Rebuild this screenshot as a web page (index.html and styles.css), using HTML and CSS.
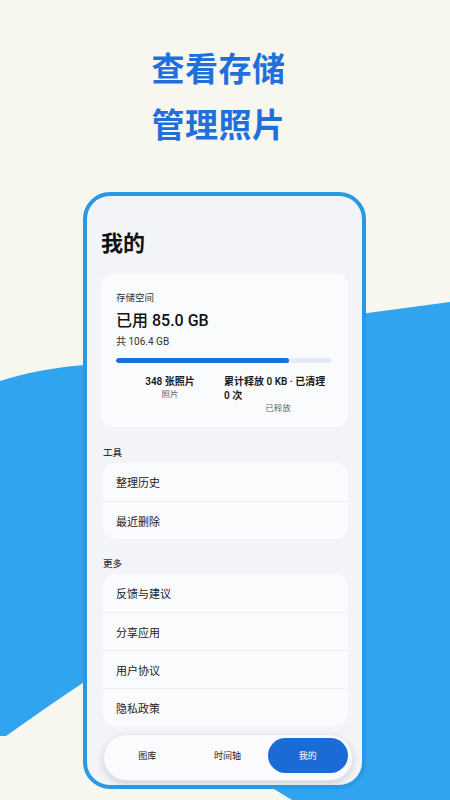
FILE: index.html
```html
<!DOCTYPE html>
<html lang="zh-CN">
<head>
<meta charset="utf-8">
<title>查看存储 管理照片</title>
<link rel="stylesheet" href="styles.css">
</head>
<body>
<svg class="blob" width="450" height="800" viewBox="0 0 450 800" aria-hidden="true">
  <path d="M0 381 Q40 368 95 364 L360 314 L450 302 L450 800 L292 800 L90 678 Q48 706 6 736 L0 736 Z" fill="#30a4ef"/>
</svg>
<main class="page">
  <h1 class="headline">查看存储<br>管理照片</h1>
  <section class="phone">
    <div class="screen">
      <h2 class="title">我的</h2>
      <div class="card storage">
        <div class="storage-label">存储空间</div>
        <div class="storage-used">已用 85.0 GB</div>
        <div class="storage-total">共 106.4 GB</div>
        <div class="bar"><div class="bar-fill" style="width: 79.9%"></div></div>
        <div class="stats">
          <div class="stat">
            <div class="stat-value">348 张照片</div>
            <div class="stat-label">照片</div>
          </div>
          <div class="stat">
            <div class="stat-value">累计释放 0 KB · 已清理 0 次</div>
            <div class="stat-label">已释放</div>
          </div>
        </div>
      </div>
      <div class="section-label">工具</div>
      <div class="card list">
        <div class="row">整理历史</div>
        <div class="row">最近删除</div>
      </div>
      <div class="section-label">更多</div>
      <div class="card list">
        <div class="row">反馈与建议</div>
        <div class="row">分享应用</div>
        <div class="row">用户协议</div>
        <div class="row">隐私政策</div>
      </div>
      <nav class="tabbar">
        <div class="tab">图库</div>
        <div class="tab">时间轴</div>
        <div class="tab active">我的</div>
      </nav>
    </div>
  </section>
</main>
</body>
</html>
```

FILE: styles.css
```css
* { box-sizing: border-box; margin: 0; padding: 0; }

html, body {
  width: 450px;
  height: 800px;
  overflow: hidden;
}

body {
  background: #f7f7ef;
  font-family: "Roboto", "Noto Sans CJK SC", sans-serif;
  color: #1c1c1e;
  position: relative;
}

.blob {
  position: absolute;
  left: 0;
  top: 0;
  z-index: 0;
}

.page {
  position: relative;
  z-index: 1;
}

.headline {
  padding-top: 39px;
  padding-right: 13px;
  text-align: center;
  font-family: "Noto Sans CJK SC", sans-serif;
  font-weight: 700;
  font-size: 33px;
  line-height: 56px;
  color: #1f70da;
  letter-spacing: 0.5px;
}

.phone {
  margin: 41px 0 0 83px;
  width: 283px;
  height: 597px;
  border: 4px solid #2a99e4;
  border-radius: 27px;
  background: #f3f4f8;
  overflow: hidden;
}

.screen {
  height: 100%;
  padding: 30px 14px 0 14px;
  display: flex;
  flex-direction: column;
}

.title {
  font-family: "Noto Sans CJK SC", sans-serif;
  font-size: 22px;
  line-height: 30px;
  font-weight: 600;
  color: #111;
}

.card {
  background: #fafbfc;
  border-radius: 12px;
}

.storage {
  margin-top: 17px;
  padding: 18px 16px 13px 15px;
}

.storage-label {
  font-size: 9.5px;
  line-height: 14px;
  color: #333;
}

.storage-used {
  margin-top: 5px;
  font-size: 16px;
  line-height: 22px;
  font-weight: 500;
  color: #111;
}

.storage-total {
  margin-top: 3px;
  font-size: 10px;
  line-height: 14px;
  color: #333;
}

.bar {
  margin-top: 9px;
  height: 5px;
  border-radius: 3px;
  background: #e5ebf4;
  overflow: hidden;
}

.bar-fill {
  height: 100%;
  background: #1f6fd8;
  border-radius: 3px;
}

.stats {
  margin-top: 12px;
  display: grid;
  grid-template-columns: 1fr 1fr;
}

.stat {
  display: flex;
  flex-direction: column;
  align-items: center;
}

.stat-value {
  font-size: 10px;
  line-height: 14px;
  font-weight: 600;
  color: #1a1a1a;
}

.stat-label {
  font-size: 8.5px;
  line-height: 11px;
  color: #666;
}

.section-label {
  margin-top: 19px;
  padding-left: 2px;
  font-size: 9.5px;
  line-height: 14px;
  font-weight: 500;
  color: #333;
}

.list {
  margin-top: 3px;
  margin-left: 2px;
  padding: 0 0 0 0;
}

.row {
  height: 38px;
  display: flex;
  align-items: center;
  padding-left: 13px;
  font-family: "Noto Sans CJK SC", sans-serif;
  font-size: 11px;
  color: #222;
}

.row + .row {
  border-top: 1px solid #eceef2;
}

.section-label + .list + .section-label {
  margin-top: 18px;
}

.tabbar {
  margin: 8px -5px 0 2px;
  height: 47px;
  padding: 3px 4px 7px 3px;
  display: grid;
  grid-template-columns: 1fr 1fr 1fr;
  background: #fbfbfd;
  border: 1px solid #e6e7ec;
  border-radius: 24px;
  box-shadow: 0 3px 7px rgba(0, 0, 0, 0.14);
}

.tab {
  display: flex;
  align-items: center;
  justify-content: center;
  font-family: "Noto Sans CJK SC", sans-serif;
  font-size: 9px;
  color: #222;
  border-radius: 19px;
}

.tab.active {
  background: #1a6bd6;
  color: #fff;
}
```
